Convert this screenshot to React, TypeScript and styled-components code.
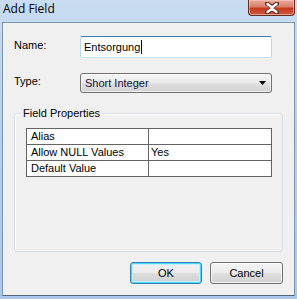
import React from "react";
import styled, { createGlobalStyle } from "styled-components";

const Global = createGlobalStyle`
  html, body { margin: 0; padding: 0; background: #b9d1ec; }
  body { width: 297px; height: 299px; overflow: hidden; }
`;

const Window = styled.div`
  width: 297px;
  height: 299px;
  box-sizing: border-box;
  display: flex;
  flex-direction: column;
  background: linear-gradient(180deg, #c9dcf1 0%, #b6cfeb 40%, #aac7ea 100%);
  font-family: "Liberation Sans", Arial, sans-serif;
`;

const TitleBar = styled.div`
  height: 22px;
  display: flex;
  align-items: flex-start;
  justify-content: space-between;
  padding-left: 3px;
  padding-right: 2px;
`;

const Title = styled.div`
  font-family: "Open Sans", "Noto Sans", sans-serif;
  font-size: 12px;
  line-height: 16px;
  margin-top: 1px;
  color: #000;
`;

const CloseButton = styled.div`
  width: 47px;
  height: 16px;
  box-sizing: border-box;
  border: 1px solid #6b2a20;
  border-top: none;
  border-radius: 0 0 4px 4px;
  background: linear-gradient(180deg, #eaaa9c 0%, #d9806c 45%, #c2391f 55%, #cf5b3c 100%);
  box-shadow: inset 0 0 0 1px rgba(255, 200, 190, 0.6);
  display: flex;
  align-items: center;
  justify-content: center;
`;

const Client = styled.div`
  flex: 1;
  margin: 0 2px 3px 2px;
  border: 1px solid #7f95ae;
  border-bottom-color: #57677a;
  background: #f0f0f0;
  display: flex;
  flex-direction: column;
  padding: 13px 0 0 11px;
  font-size: 11px;
  color: #000;
`;

const Row = styled.div<{ $gap?: number }>`
  display: flex;
  align-items: flex-start;
  margin-bottom: ${(p) => p.$gap ?? 0}px;
`;

const Label = styled.div<{ $top: number }>`
  width: 66px;
  margin-top: ${(p) => p.$top}px;
  line-height: 13px;
`;

const TextBox = styled.div`
  width: 192px;
  height: 22px;
  box-sizing: border-box;
  border: 1px solid;
  border-color: #3d7bad #b7d9ed #c7e2f1 #b7d9ed;
  border-radius: 2px;
  background: #fff;
  display: flex;
  align-items: center;
  padding-left: 3px;
  font-size: 11px;
`;

const Caret = styled.span`
  display: inline-block;
  width: 1px;
  height: 14px;
  background: #000;
  margin-left: 1px;
`;

const Combo = styled.div`
  width: 192px;
  height: 20px;
  box-sizing: border-box;
  border: 1px solid #707070;
  border-radius: 3px;
  background: linear-gradient(180deg, #f4f4f4 0%, #ececec 48%, #dfdfdf 52%, #d2d2d2 100%);
  box-shadow: inset 0 0 0 1px rgba(255, 255, 255, 0.7);
  display: flex;
  align-items: center;
  justify-content: space-between;
  padding: 0 5px 0 4px;
  font-size: 11px;
  color: #10103a;
`;

const Group = styled.fieldset`
  margin: 0;
  width: 269px;
  height: 145px;
  box-sizing: border-box;
  border: 1px solid #d5dfe5;
  border-radius: 3px;
  box-shadow: inset 1px 1px 0 #fff;
  padding: 8px 0 0 11px;
`;

const Legend = styled.legend`
  margin-left: -5px;
  padding: 0 2px;
  font-size: 11px;
  line-height: 13px;
  color: #000;
`;

const Table = styled.div`
  width: 244px;
  border: 1px solid #646464;
  background: #fff;
  display: grid;
  grid-template-columns: 121px 1fr;
`;

const Cell = styled.div<{ $right?: boolean; $last?: boolean }>`
  height: ${(p) => (p.$last ? 15 : 16)}px;
  box-sizing: border-box;
  border-bottom: ${(p) => (p.$last ? "none" : "1px solid #646464")};
  border-left: ${(p) => (p.$right ? "1px solid #646464" : "none")};
  padding-left: ${(p) => (p.$right ? 2 : 4)}px;
  font-size: 11px;
  line-height: 15px;
  white-space: nowrap;
`;

const Buttons = styled.div`
  display: flex;
  justify-content: flex-end;
  gap: 8px;
  width: 269px;
  margin-top: 10px;
`;

const Button = styled.div<{ $default?: boolean }>`
  width: ${(p) => (p.$default ? 72 : 73)}px;
  height: 22px;
  box-sizing: border-box;
  border: 1px solid ${(p) => (p.$default ? "#3c7fb1" : "#707070")};
  border-radius: 3px;
  background: ${(p) =>
    p.$default
      ? "linear-gradient(180deg, #f3f3f3 0%, #ebebeb 48%, #dddddd 52%, #cfcfcf 100%)"
      : "linear-gradient(180deg, #f4f4f4 0%, #ececec 48%, #dfdfdf 52%, #d2d2d2 100%)"};
  box-shadow: ${(p) =>
    p.$default ? "inset 0 0 0 1px #48d8fb, inset 0 0 0 2px #c6f0fd" : "inset 0 0 0 1px rgba(255,255,255,0.75)"};
  display: flex;
  align-items: center;
  justify-content: center;
  font-size: 11px;
  color: #000;
`;

export default function App() {
  return (
    <>
      <Global />
      <Window>
        <TitleBar>
          <Title>Add Field</Title>
          <CloseButton>
            <svg width="14" height="12" viewBox="0 0 14 12">
              <path
                d="M2 1.5 L7 5 L12 1.5 M2 10.5 L7 7 L12 10.5"
                stroke="#5a2a22"
                strokeWidth="4.2"
                fill="none"
                strokeLinecap="round"
              />
              <path
                d="M2.5 2 L7 5.5 L11.5 2 M2.5 10 L7 6.5 L11.5 10"
                stroke="#fff"
                strokeWidth="2.4"
                fill="none"
                strokeLinecap="round"
              />
            </svg>
          </CloseButton>
        </TitleBar>
        <Client>
          <Row $gap={15}>
            <Label $top={3}>Name:</Label>
            <TextBox>
              Entsorgung
              <Caret />
            </TextBox>
          </Row>
          <Row $gap={14}>
            <Label $top={2}>Type:</Label>
            <Combo>
              <span>Short Integer</span>
              <svg width="7" height="4" viewBox="0 0 7 4">
                <path d="M0 0 H7 L3.5 4 Z" fill="#000" />
              </svg>
            </Combo>
          </Row>
          <Group>
            <Legend>Field Properties</Legend>
            <Table>
              <Cell>Alias</Cell>
              <Cell $right />
              <Cell>Allow NULL Values</Cell>
              <Cell $right>Yes</Cell>
              <Cell $last>Default Value</Cell>
              <Cell $right $last />
            </Table>
          </Group>
          <Buttons>
            <Button $default>OK</Button>
            <Button>Cancel</Button>
          </Buttons>
        </Client>
      </Window>
    </>
  );
}
